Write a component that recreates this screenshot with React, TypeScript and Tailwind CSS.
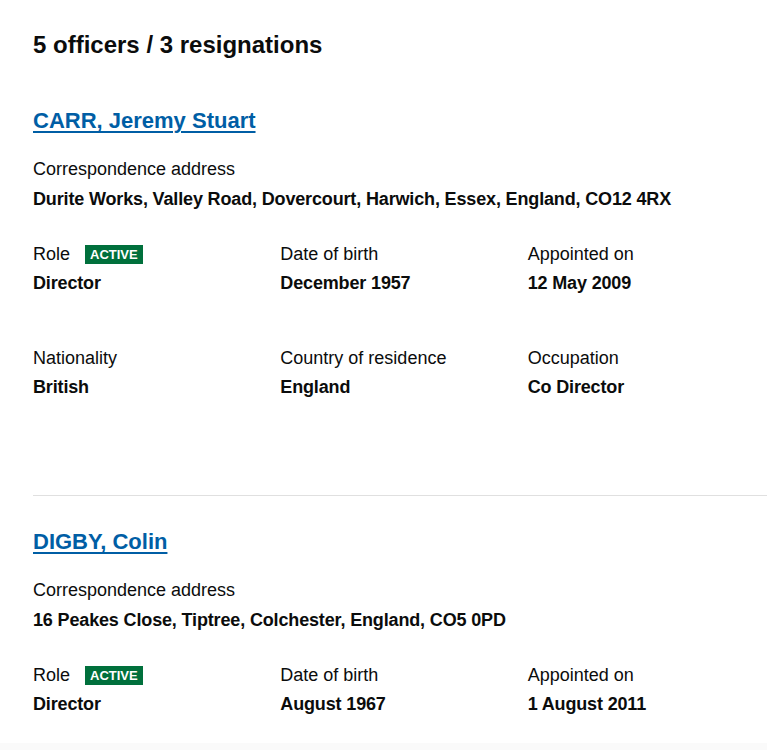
import React from "react";

type Officer = {
  name: string;
  address: string;
  role: string;
  dob: string;
  appointed: string;
  nationality?: string;
  residence?: string;
  occupation?: string;
};

const officers: Officer[] = [
  {
    name: "CARR, Jeremy Stuart",
    address: "Durite Works, Valley Road, Dovercourt, Harwich, Essex, England, CO12 4RX",
    role: "Director",
    dob: "December 1957",
    appointed: "12 May 2009",
    nationality: "British",
    residence: "England",
    occupation: "Co Director",
  },
  {
    name: "DIGBY, Colin",
    address: "16 Peakes Close, Tiptree, Colchester, England, CO5 0PD",
    role: "Director",
    dob: "August 1967",
    appointed: "1 August 2011",
  },
];

function Field({ label, value, badge }: { label: string; value: string; badge?: boolean }) {
  return (
    <div>
      <div className="flex items-center gap-[15px] leading-[25px]">
        <span>{label}</span>
        {badge && (
          <span className="bg-[#00703c] text-white font-bold text-[13px] leading-[19px] px-[5px]">
            ACTIVE
          </span>
        )}
      </div>
      <div className="mt-[4px] font-bold leading-[25px] tracking-[-0.15px]">{value}</div>
    </div>
  );
}

function OfficerBlock({ o }: { o: Officer }) {
  return (
    <div>
      <a href="#" className="block w-fit text-[22px] leading-[30px] font-bold text-[#005ea5] underline decoration-2 underline-offset-[3px]">
        {o.name}
      </a>
      <div className="mt-[21px] leading-[25px]">Correspondence address</div>
      <div className="mt-[5px] font-bold leading-[25px] tracking-[-0.15px]">{o.address}</div>
      <div className="mt-[30px] grid grid-cols-3">
        <Field label="Role" value={o.role} badge />
        <Field label="Date of birth" value={o.dob} />
        <Field label="Appointed on" value={o.appointed} />
      </div>
      {o.nationality && (
        <div className="mt-[50px] grid grid-cols-3">
          <Field label="Nationality" value={o.nationality} />
          <Field label="Country of residence" value={o.residence || ""} />
          <Field label="Occupation" value={o.occupation || ""} />
        </div>
      )}
    </div>
  );
}

export default function App() {
  return (
    <div className="w-[767px] h-[750px] overflow-hidden bg-white text-[#0b0c0c] text-[18px]" style={{ fontFamily: '"Liberation Sans", Arial, sans-serif' }}>
      <div className="w-[742px] ml-[33px] pt-[30px]">
        <h2 className="text-[24px] leading-[30px] font-bold">5 officers / 3 resignations</h2>
        <div className="mt-[46px]">
          <OfficerBlock o={officers[0]} />
        </div>
        <hr className="mt-[95px] border-0 border-t border-[#e0e0e0]" />
        <div className="mt-[31px]">
          <OfficerBlock o={officers[1]} />
        </div>
      </div>
      <div className="mt-[26px] h-[40px] bg-[#fafafa]" />
    </div>
  );
}
